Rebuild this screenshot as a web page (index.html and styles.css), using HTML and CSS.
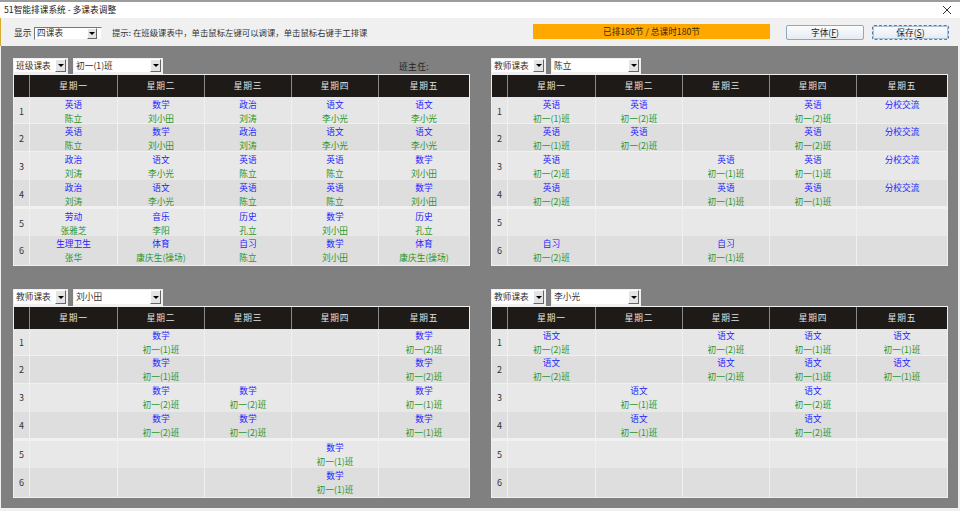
FILE: index.html
```html
<!DOCTYPE html>
<html lang="zh-CN">
<head>
<meta charset="utf-8">
<title>51智能排课系统 - 多课表调整</title>
<link rel="stylesheet" href="styles.css">
</head>
<body>
<div class="window">
  <div class="titlebar">
    <span class="title">51智能排课系统 - 多课表调整</span>
    <svg class="close" width="10" height="10" viewBox="0 0 10 10"><path d="M1 1L9 9M9 1L1 9" stroke="#333" stroke-width="1" fill="none"/></svg>
  </div>
  <div class="toolbar">
    <span class="lbl">显示</span>
    <div class="combo sunken"><span class="val">四课表</span><span class="arrow"></span></div>
    <span class="hint">提示: 在班级课表中，单击鼠标左键可以调课，单击鼠标右键手工排课</span>
    <div class="status">已排180节 / 总课时180节</div>
    <div class="btn">字体(<u>F</u>)</div>
    <div class="btn focus">保存(<u>S</u>)</div>
  </div>
  <div class="workspace">
    <section class="panel upper">
      <div class="controls">
        <div class="combo kind"><span class="val">班级课表</span><span class="arrow"></span></div>
        <div class="combo who"><span class="val">初一(1)班</span><span class="arrow"></span></div>
        <span class="head-teacher">班主任:</span>
      </div>
      <div class="tt">
        <div class="row head"><div></div><div>星期一</div><div>星期二</div><div>星期三</div><div>星期四</div><div>星期五</div></div>
        <div class="row r1"><div class="n">1</div><div class="c"><b>英语</b><i>陈立</i></div><div class="c"><b>数学</b><i>刘小田</i></div><div class="c"><b>政治</b><i>刘涛</i></div><div class="c"><b>语文</b><i>李小光</i></div><div class="c"><b>语文</b><i>李小光</i></div></div>
        <div class="row r2"><div class="n">2</div><div class="c"><b>英语</b><i>陈立</i></div><div class="c"><b>数学</b><i>刘小田</i></div><div class="c"><b>政治</b><i>刘涛</i></div><div class="c"><b>语文</b><i>李小光</i></div><div class="c"><b>语文</b><i>李小光</i></div></div>
        <div class="row r3"><div class="n">3</div><div class="c"><b>政治</b><i>刘涛</i></div><div class="c"><b>语文</b><i>李小光</i></div><div class="c"><b>英语</b><i>陈立</i></div><div class="c"><b>英语</b><i>陈立</i></div><div class="c"><b>数学</b><i>刘小田</i></div></div>
        <div class="row r4"><div class="n">4</div><div class="c"><b>政治</b><i>刘涛</i></div><div class="c"><b>语文</b><i>李小光</i></div><div class="c"><b>英语</b><i>陈立</i></div><div class="c"><b>英语</b><i>陈立</i></div><div class="c"><b>数学</b><i>刘小田</i></div></div>
        <div class="row r5"><div class="n">5</div><div class="c"><b>劳动</b><i>张雅芝</i></div><div class="c"><b>音乐</b><i>李阳</i></div><div class="c"><b>历史</b><i>孔立</i></div><div class="c"><b>数学</b><i>刘小田</i></div><div class="c"><b>历史</b><i>孔立</i></div></div>
        <div class="row r6"><div class="n">6</div><div class="c"><b>生理卫生</b><i>张华</i></div><div class="c"><b>体育</b><i>康庆生(操场)</i></div><div class="c"><b>自习</b><i>陈立</i></div><div class="c"><b>数学</b><i>刘小田</i></div><div class="c"><b>体育</b><i>康庆生(操场)</i></div></div>
      </div>
    </section>
    <section class="panel upper">
      <div class="controls">
        <div class="combo kind"><span class="val">教师课表</span><span class="arrow"></span></div>
        <div class="combo who"><span class="val">陈立</span><span class="arrow"></span></div>
      </div>
      <div class="tt">
        <div class="row head"><div></div><div>星期一</div><div>星期二</div><div>星期三</div><div>星期四</div><div>星期五</div></div>
        <div class="row r1"><div class="n">1</div><div class="c"><b>英语</b><i>初一(1)班</i></div><div class="c"><b>英语</b><i>初一(2)班</i></div><div class="c"></div><div class="c"><b>英语</b><i>初一(2)班</i></div><div class="c top"><b>分校交流</b></div></div>
        <div class="row r2"><div class="n">2</div><div class="c"><b>英语</b><i>初一(1)班</i></div><div class="c"><b>英语</b><i>初一(2)班</i></div><div class="c"></div><div class="c"><b>英语</b><i>初一(2)班</i></div><div class="c top"><b>分校交流</b></div></div>
        <div class="row r3"><div class="n">3</div><div class="c"><b>英语</b><i>初一(2)班</i></div><div class="c"></div><div class="c"><b>英语</b><i>初一(1)班</i></div><div class="c"><b>英语</b><i>初一(1)班</i></div><div class="c top"><b>分校交流</b></div></div>
        <div class="row r4"><div class="n">4</div><div class="c"><b>英语</b><i>初一(2)班</i></div><div class="c"></div><div class="c"><b>英语</b><i>初一(1)班</i></div><div class="c"><b>英语</b><i>初一(1)班</i></div><div class="c top"><b>分校交流</b></div></div>
        <div class="row r5"><div class="n">5</div><div class="c"></div><div class="c"></div><div class="c"></div><div class="c"></div><div class="c"></div></div>
        <div class="row r6"><div class="n">6</div><div class="c"><b>自习</b><i>初一(2)班</i></div><div class="c"></div><div class="c"><b>自习</b><i>初一(1)班</i></div><div class="c"></div><div class="c"></div></div>
      </div>
    </section>
    <section class="panel">
      <div class="controls">
        <div class="combo kind"><span class="val">教师课表</span><span class="arrow"></span></div>
        <div class="combo who"><span class="val">刘小田</span><span class="arrow"></span></div>
      </div>
      <div class="tt">
        <div class="row head"><div></div><div>星期一</div><div>星期二</div><div>星期三</div><div>星期四</div><div>星期五</div></div>
        <div class="row r1"><div class="n">1</div><div class="c"></div><div class="c"><b>数学</b><i>初一(1)班</i></div><div class="c"></div><div class="c"></div><div class="c"><b>数学</b><i>初一(2)班</i></div></div>
        <div class="row r2"><div class="n">2</div><div class="c"></div><div class="c"><b>数学</b><i>初一(1)班</i></div><div class="c"></div><div class="c"></div><div class="c"><b>数学</b><i>初一(2)班</i></div></div>
        <div class="row r3"><div class="n">3</div><div class="c"></div><div class="c"><b>数学</b><i>初一(2)班</i></div><div class="c"><b>数学</b><i>初一(2)班</i></div><div class="c"></div><div class="c"><b>数学</b><i>初一(1)班</i></div></div>
        <div class="row r4"><div class="n">4</div><div class="c"></div><div class="c"><b>数学</b><i>初一(2)班</i></div><div class="c"><b>数学</b><i>初一(2)班</i></div><div class="c"></div><div class="c"><b>数学</b><i>初一(1)班</i></div></div>
        <div class="row r5"><div class="n">5</div><div class="c"></div><div class="c"></div><div class="c"></div><div class="c"><b>数学</b><i>初一(1)班</i></div><div class="c"></div></div>
        <div class="row r6"><div class="n">6</div><div class="c"></div><div class="c"></div><div class="c"></div><div class="c"><b>数学</b><i>初一(1)班</i></div><div class="c"></div></div>
      </div>
    </section>
    <section class="panel">
      <div class="controls">
        <div class="combo kind"><span class="val">教师课表</span><span class="arrow"></span></div>
        <div class="combo who"><span class="val">李小光</span><span class="arrow"></span></div>
      </div>
      <div class="tt">
        <div class="row head"><div></div><div>星期一</div><div>星期二</div><div>星期三</div><div>星期四</div><div>星期五</div></div>
        <div class="row r1"><div class="n">1</div><div class="c"><b>语文</b><i>初一(2)班</i></div><div class="c"></div><div class="c"><b>语文</b><i>初一(2)班</i></div><div class="c"><b>语文</b><i>初一(1)班</i></div><div class="c"><b>语文</b><i>初一(1)班</i></div></div>
        <div class="row r2"><div class="n">2</div><div class="c"><b>语文</b><i>初一(2)班</i></div><div class="c"></div><div class="c"><b>语文</b><i>初一(2)班</i></div><div class="c"><b>语文</b><i>初一(1)班</i></div><div class="c"><b>语文</b><i>初一(1)班</i></div></div>
        <div class="row r3"><div class="n">3</div><div class="c"></div><div class="c"><b>语文</b><i>初一(1)班</i></div><div class="c"></div><div class="c"><b>语文</b><i>初一(2)班</i></div><div class="c"></div></div>
        <div class="row r4"><div class="n">4</div><div class="c"></div><div class="c"><b>语文</b><i>初一(1)班</i></div><div class="c"></div><div class="c"><b>语文</b><i>初一(2)班</i></div><div class="c"></div></div>
        <div class="row r5"><div class="n">5</div><div class="c"></div><div class="c"></div><div class="c"></div><div class="c"></div><div class="c"></div></div>
        <div class="row r6"><div class="n">6</div><div class="c"></div><div class="c"></div><div class="c"></div><div class="c"></div><div class="c"></div></div>
      </div>
    </section>
  </div>
</div>
</body>
</html>
```
FILE: styles.css
```css
* { box-sizing: border-box; }
html, body { margin: 0; padding: 0; }
body {
  width: 960px;
  height: 511px;
  overflow: hidden;
  font-family: "Noto Sans CJK SC", "Noto Sans", sans-serif;
  font-size: 8.7px;
  color: #333;
  background: #f0f0f0;
}
.window {
  height: 511px;
  display: flex;
  flex-direction: column;
  border-top: 2px solid #9c9c9c;
}
.titlebar {
  height: 16px;
  background: #fff;
  display: flex;
  align-items: center;
  justify-content: space-between;
  padding: 0 8px 0 4px;
  flex: none;
}
.title { line-height: 16px; color: #222; }
.toolbar {
  height: 28px;
  flex: none;
  background: #f0f0f0;
  border-left: 1px solid #d8ac2a;
  display: flex;
  align-items: center;
  padding: 0 11px 0 13px;
}
.lbl { width: 20px; flex: none; }
.hint { margin-left: 10px; font-size: 8.4px; }
.status {
  align-self: flex-start;
  margin: 6px 0 0 auto;
  width: 237px;
  height: 15px;
  line-height: 15px;
  background: #ffa800;
  text-align: center;
  color: #3a2a00;
}
.btn {
  align-self: flex-start;
  margin: 7px 0 0 16px;
  width: 78px;
  height: 15px;
  line-height: 13px;
  text-align: center;
  border: 1px solid #8fa8c0;
  border-radius: 2px;
  background: linear-gradient(#fbfcfd, #e6ebf2);
  color: #222;
}
.btn.focus {
  margin-left: 8px;
  border: 1px dashed #4f7fae;
  outline: 1px solid #a9c2dc;
  outline-offset: -2px;
  width: 77px;
}
.combo {
  display: flex;
  align-items: center;
  background: #fff;
  height: 17px;
  border: 2px solid #f0f0f0;
  border-left-width: 1px;
  border-top-width: 1px;
}
.combo.sunken {
  width: 68px;
  height: 13px;
  margin-top: 2px;
  flex: none;
  border: 1px solid #777;
  border-right-color: #f0f0f0;
  border-bottom-color: #f0f0f0;
}
.kind { width: 55px; }
.who { width: 90px; }
.upper .combo { margin-top: 1px; height: 16px; }
.val { flex: 1; padding-left: 2px; line-height: 12px; white-space: nowrap; overflow: hidden; color: #333; }
.arrow {
  flex: none;
  width: 11px;
  align-self: stretch;
  background: #e4e4e4;
  border: 1px solid #fff;
  border-right-color: #666;
  border-bottom-color: #666;
  display: flex;
  align-items: center;
  justify-content: center;
}
.arrow::after {
  content: "";
  border: 3px solid transparent;
  border-top: 3px solid #000;
  border-bottom: 0;
}
.sunken .arrow { width: 10px; margin-right: 4px; }
.workspace {
  flex: none;
  height: 462px;
  margin-left: 1px;
  margin-right: 2px;
  background: #808080;
  padding: 11px 10px 10px 12px;
  display: grid;
  grid-template-columns: 457px 457px;
  grid-template-rows: 209px 209px;
  column-gap: 21px;
  row-gap: 23px;
}
.panel { display: flex; flex-direction: column; }
.controls {
  height: 17px;
  flex: none;
  display: flex;
  gap: 5px;
  align-items: stretch;
}
.head-teacher {
  margin-left: 231px;
  align-self: center;
  color: #222;
  line-height: 17px;
  margin-top: 1px;
  letter-spacing: 0.4px;
}
.tt {
  height: 192px;
  border: 1px solid #f0f0f0;
  background: #f0f0f0;
  display: flex;
  flex-direction: column;
}
.row {
  display: grid;
  grid-template-columns: 15px 88px 87px 87px 87px 91px;
  flex: none;
  line-height: 14px;
}
.row > div + div { border-left: 1px solid #f0f0f0; }
.head { height: 22px; background: #1e1a18; color: #e4e4e4; }
.head > div { display: flex; align-items: center; justify-content: center; letter-spacing: 0.8px; }
.row.head > div + div { border-left: 1px solid #8a8886; }
.r1 { height: 27px; background: #e6e6e6; border-bottom: 1px solid #f0f0f0; }
.r2 { height: 28px; background: #dedede; border-bottom: 1px solid #f0f0f0; }
.r3 { height: 28px; background: #e8e8e8; }
.r4 { height: 26px; background: #dedede; }
.r5 { height: 27px; margin-top: 3px; background: #e8e8e8; }
.r6 { height: 29px; background: #dedede; }
.n { display: flex; align-items: center; padding-left: 5px; color: #333; font-size: 9px; }
.c { display: flex; flex-direction: column; align-items: center; justify-content: center; }
.c.top { justify-content: flex-start; }
.upper .c { padding-top: 1px; }
.c b { font-weight: 400; color: #2424ff; white-space: nowrap; }
.c i { font-style: normal; color: #2b962b; white-space: nowrap; }
```
